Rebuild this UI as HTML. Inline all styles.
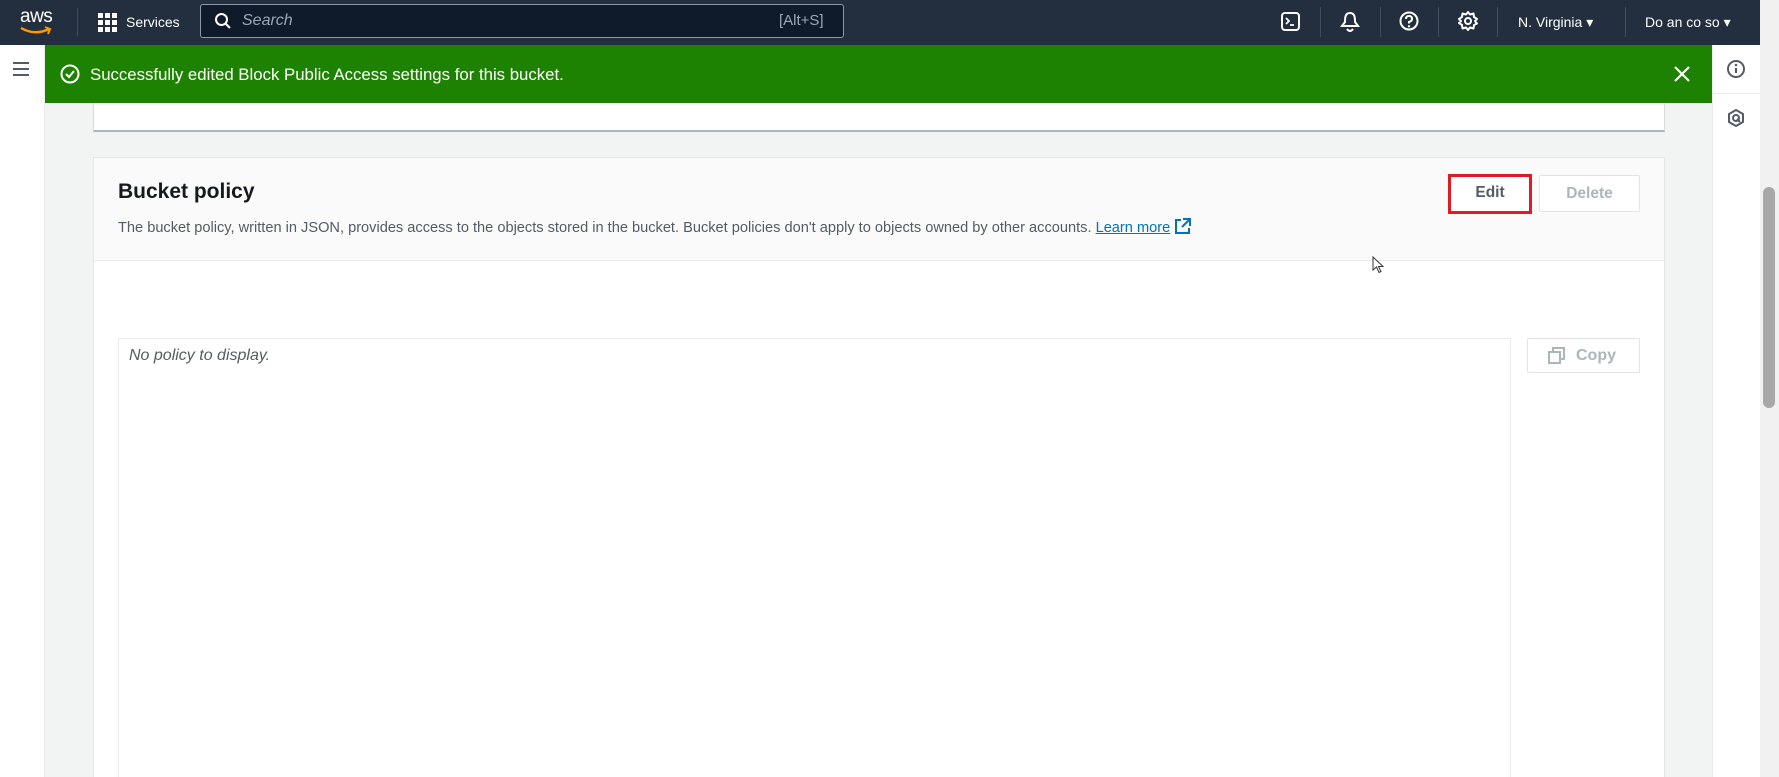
<!DOCTYPE html>
<html style="overflow:hidden;width:1779px;height:777px"><head><meta charset="utf-8"><style>
*{box-sizing:border-box;margin:0;padding:0}
body{width:1779px;height:777px;overflow:hidden;background:#f2f3f3;font-family:"Liberation Sans",sans-serif;position:relative}
.abs{position:absolute}
.top{left:0;top:0;width:1760px;height:45px;background:#232f3e}
.sb{left:1760px;top:0;width:19px;height:777px;background:#f1f1f1}
.thumb{left:1763px;top:187px;width:12px;height:221px;background:#a8a8a8;border-radius:6px}
.tw{color:#fff;font-size:14px}
</style></head><body>
<div class="abs top"></div>
<div class="abs sb"></div><div class="abs thumb"></div>
<div class="abs tw" style="left:20px;top:6px;font-size:19px;letter-spacing:-0.5px">aws</div>
<svg class="abs" style="left:19px;top:26px" width="34" height="10"><path d="M2 2 Q16 10 30 3" stroke="#ff9900" stroke-width="2.4" fill="none"/><path d="M26 1 L31 3 L29 8" stroke="#ff9900" stroke-width="2" fill="none"/></svg>
<div class="abs" style="left:77px;top:8px;width:1px;height:28px;background:#414d5c"></div>
<svg class="abs" style="left:98px;top:13px" width="20" height="20" fill="#fff"><rect x="0" y="0" width="5" height="5"/><rect x="7" y="0" width="5" height="5"/><rect x="14" y="0" width="5" height="5"/><rect x="0" y="7" width="5" height="5"/><rect x="7" y="7" width="5" height="5"/><rect x="14" y="7" width="5" height="5"/><rect x="0" y="14" width="5" height="5"/><rect x="7" y="14" width="5" height="5"/><rect x="14" y="14" width="5" height="5"/></svg>
<div class="abs tw" style="left:126px;top:14px">Services</div>
<div class="abs" style="left:200px;top:4px;width:644px;height:34px;background:#0f1b2a;border:1px solid #8d99a8;border-radius:3px"></div>
<svg class="abs" style="left:214px;top:12px" width="18" height="18"><circle cx="7.5" cy="7.5" r="5.5" stroke="#fff" stroke-width="2" fill="none"/><path d="M11.5 11.5 L16 16" stroke="#fff" stroke-width="2"/></svg>
<div class="abs" style="left:242px;top:12px;color:#9ba7b6;font-style:italic;font-size:16px">Search</div>
<div class="abs" style="left:779px;top:12px;color:#9ba7b6;font-size:15px">[Alt+S]</div>
<svg class="abs" style="left:1280px;top:11px" width="22" height="22"><rect x="2" y="2" width="17" height="17" rx="3" stroke="#fff" stroke-width="2" fill="none"/><path d="M6 7 L9 10 L6 13 M10 14 H14" stroke="#fff" stroke-width="1.8" fill="none"/></svg>
<div class="abs" style="left:1320px;top:7px;width:1px;height:30px;background:#414d5c"></div>
<svg class="abs" style="left:1339px;top:10px" width="22" height="24"><path d="M11 3 C6 3 6 8 6 12 L3 16 H19 L16 12 C16 8 16 3 11 3Z" stroke="#fff" stroke-width="2" fill="none"/><path d="M8 19 Q11 23 14 19" stroke="#fff" stroke-width="2" fill="none"/></svg>
<div class="abs" style="left:1380px;top:7px;width:1px;height:30px;background:#414d5c"></div>
<svg class="abs" style="left:1398px;top:10px" width="22" height="22"><circle cx="11" cy="11" r="8.5" stroke="#fff" stroke-width="2" fill="none"/><path d="M8 9 Q8 6 11 6 Q14 6 14 9 Q14 11 11 12 V13.5" stroke="#fff" stroke-width="2" fill="none"/><circle cx="11" cy="16.3" r="1.2" fill="#fff"/></svg>
<div class="abs" style="left:1438px;top:7px;width:1px;height:30px;background:#414d5c"></div>
<svg class="abs" style="left:1457px;top:10px" width="22" height="22"><circle cx="11" cy="11" r="3" stroke="#fff" stroke-width="2" fill="none"/><path d="M11 2 L13 4.5 L16.5 3.5 L17 7 L20 9 L18 11 L20 13.5 L17 15 L16.5 18.5 L13 17.5 L11 20 L9 17.5 L5.5 18.5 L5 15 L2 13 L4 11 L2 9 L5 7 L5.5 3.5 L9 4.5Z" stroke="#fff" stroke-width="2" fill="none" stroke-linejoin="round"/></svg>
<div class="abs" style="left:1497px;top:7px;width:1px;height:30px;background:#414d5c"></div>
<div class="abs tw" style="left:1518px;top:14px">N. Virginia ▾</div>
<div class="abs" style="left:1625px;top:7px;width:1px;height:30px;background:#414d5c"></div>
<div class="abs tw" style="left:1645px;top:14px">Do an co so ▾</div>
<div class="abs" style="left:0;top:45px;width:45px;height:732px;background:#fff;border-right:1px solid #e9ebed"></div>
<svg class="abs" style="left:12px;top:61px" width="18" height="16"><path d="M1 2H17M1 8H17M1 14H17" stroke="#545b64" stroke-width="2"/></svg>
<div class="abs" style="left:1712px;top:45px;width:48px;height:732px;background:#fff;border-left:1px solid #e9ebed"></div>
<div class="abs" style="left:1712px;top:93px;width:48px;height:1px;background:#e9ebed"></div>
<svg class="abs" style="left:1726px;top:59px" width="20" height="20"><circle cx="10" cy="10" r="8" stroke="#545b64" stroke-width="2" fill="none"/><path d="M10 9V14" stroke="#545b64" stroke-width="2.2"/><circle cx="10" cy="6" r="1.3" fill="#545b64"/></svg>
<svg class="abs" style="left:1726px;top:108px" width="20" height="20"><path d="M10 2L17 6V14L10 18L3 14V6Z" stroke="#545b64" stroke-width="2" fill="none" stroke-linejoin="round"/><circle cx="10" cy="10" r="3" stroke="#545b64" stroke-width="2" fill="none"/><path d="M11 11L14 14" stroke="#545b64" stroke-width="2"/></svg>
<div class="abs" style="left:93px;top:100px;width:1572px;height:32px;background:#fff;border:1px solid #d5dbdb;border-bottom:2px solid #aab7b8"></div>
<div class="abs" style="left:45px;top:45px;width:1667px;height:58px;background:#1d8102"></div>
<svg class="abs" style="left:59px;top:63px" width="22" height="22"><circle cx="11" cy="11" r="8.5" stroke="#fff" stroke-width="2" fill="none"/><path d="M7 11 L10 14 L15 8" stroke="#fff" stroke-width="2" fill="none"/></svg>
<div class="abs" style="left:90px;top:65px;color:#fff;font-size:16.8px">Successfully edited Block Public Access settings for this bucket.</div>
<svg class="abs" style="left:1673px;top:65px" width="18" height="18"><path d="M2 2L16 16M16 2L2 16" stroke="#fff" stroke-width="2.2"/></svg>
<div class="abs" style="left:93px;top:157px;width:1572px;height:620px;background:#fff;border:1px solid #e3e6e6;border-bottom:none"></div>
<div class="abs" style="left:94px;top:158px;width:1570px;height:103px;background:#fafafa;border-bottom:1px solid #eaeded"></div>
<div class="abs" style="left:118px;top:180px;color:#16191f;font-size:21px;font-weight:bold">Bucket policy</div>
<div class="abs" style="left:118px;top:218px;color:#545b64;font-size:14.6px;white-space:nowrap">The bucket policy, written in JSON, provides access to the objects stored in the bucket. Bucket policies don't apply to objects owned by other accounts. <span style="color:#0073bb;text-decoration:underline">Learn more</span> <svg width="17" height="17" style="vertical-align:-3px"><path d="M7 2H2V15H15V10" stroke="#0073bb" stroke-width="2" fill="none"/><path d="M9 1H16V8M16 1L8 9" stroke="#0073bb" stroke-width="2" fill="none"/></svg></div>
<div class="abs" style="left:1448px;top:174px;width:84px;height:40px;border:3px solid #e01b24;background:#fff"></div>
<div class="abs" style="left:1448px;top:184px;width:84px;text-align:center;color:#545b64;font-weight:bold;font-size:15.5px">Edit</div>
<div class="abs" style="left:1539px;top:175px;width:101px;height:37px;border:1px solid #e1e4e4;border-radius:2px;background:#fff;color:#aab7b8;font-weight:bold;font-size:15.5px;text-align:center;line-height:35px">Delete</div>
<div class="abs" style="left:118px;top:338px;width:1393px;height:439px;border:1px solid #e9ebed;border-bottom:none;background:#fff"></div>
<div class="abs" style="left:129px;top:347px;color:#545b64;font-style:italic;font-size:16px">No policy to display.</div>
<div class="abs" style="left:1527px;top:338px;width:113px;height:35px;border:1px solid #e1e4e4;border-radius:2px;background:#fff"></div>
<svg class="abs" style="left:1548px;top:347px" width="18" height="18"><rect x="1" y="5" width="11" height="11" stroke="#aab7b8" stroke-width="2" fill="none"/><path d="M5 5V1H16V12H12" stroke="#aab7b8" stroke-width="2" fill="none"/></svg>
<div class="abs" style="left:1576px;top:347px;color:#aab7b8;font-weight:bold;font-size:16px">Copy</div>
<svg class="abs" style="left:1372px;top:256px" width="12" height="18"><path d="M1 1V14L4.5 11L7 16.5L9 15.5L6.5 10.5H11Z" fill="#fff" stroke="#333" stroke-width="1"/></svg>
</body></html>
